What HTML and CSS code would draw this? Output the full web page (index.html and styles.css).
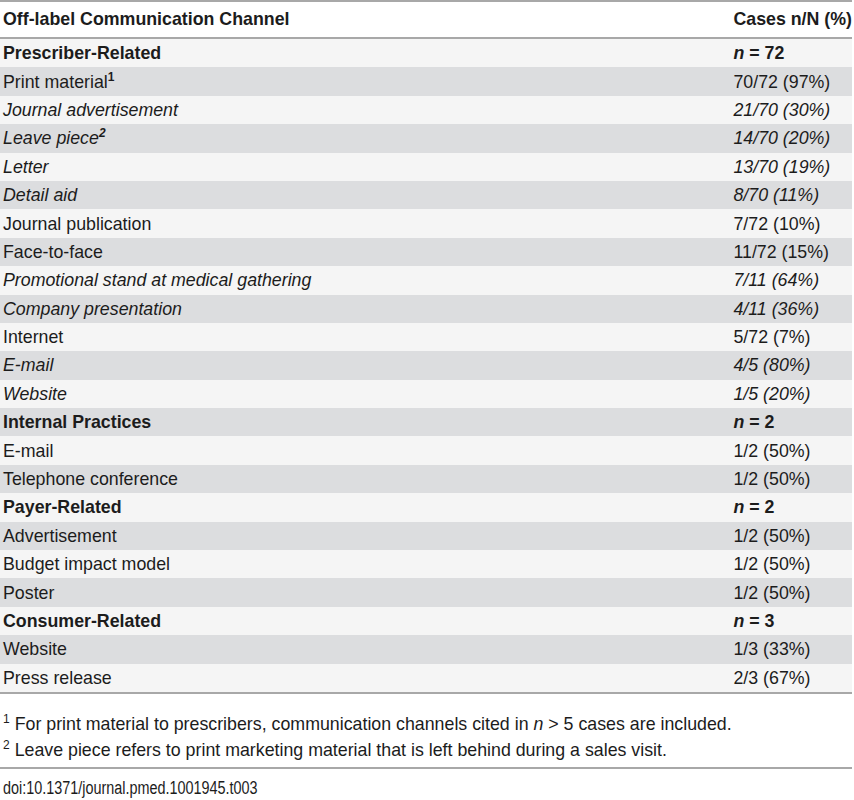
FILE: index.html
```html
<!DOCTYPE html>
<html lang="en">
<head>
    <meta charset="UTF-8">
    <title>Off-label Communication Channels</title>
    <link rel="stylesheet" href="styles.css">
</head>
<body>
    <div class="table-wrap">
        <table class="data-table">
            <thead>
                <tr>
                    <th>Off-label Communication Channel</th>
                    <th class="col-cases">Cases n/N (%)</th>
                </tr>
            </thead>
            <tbody>
                <tr class="group"><td>Prescriber-Related</td><td><i>n</i> = 72</td></tr>
                <tr><td>Print material<sup>1</sup></td><td>70/72 (97%)</td></tr>
                <tr class="sub"><td>Journal advertisement</td><td>21/70 (30%)</td></tr>
                <tr class="sub"><td>Leave piece<sup>2</sup></td><td>14/70 (20%)</td></tr>
                <tr class="sub"><td>Letter</td><td>13/70 (19%)</td></tr>
                <tr class="sub"><td>Detail aid</td><td>8/70 (11%)</td></tr>
                <tr><td>Journal publication</td><td>7/72 (10%)</td></tr>
                <tr><td>Face-to-face</td><td>11/72 (15%)</td></tr>
                <tr class="sub"><td>Promotional stand at medical gathering</td><td>7/11 (64%)</td></tr>
                <tr class="sub"><td>Company presentation</td><td>4/11 (36%)</td></tr>
                <tr><td>Internet</td><td>5/72 (7%)</td></tr>
                <tr class="sub"><td>E-mail</td><td>4/5 (80%)</td></tr>
                <tr class="sub"><td>Website</td><td>1/5 (20%)</td></tr>
                <tr class="group"><td>Internal Practices</td><td><i>n</i> = 2</td></tr>
                <tr><td>E-mail</td><td>1/2 (50%)</td></tr>
                <tr><td>Telephone conference</td><td>1/2 (50%)</td></tr>
                <tr class="group"><td>Payer-Related</td><td><i>n</i> = 2</td></tr>
                <tr><td>Advertisement</td><td>1/2 (50%)</td></tr>
                <tr><td>Budget impact model</td><td>1/2 (50%)</td></tr>
                <tr><td>Poster</td><td>1/2 (50%)</td></tr>
                <tr class="group"><td>Consumer-Related</td><td><i>n</i> = 3</td></tr>
                <tr><td>Website</td><td>1/3 (33%)</td></tr>
                <tr><td>Press release</td><td>2/3 (67%)</td></tr>
            </tbody>
        </table>

        <div class="notes">
            <p><sup>1</sup> For print material to prescribers, communication channels cited in <i>n</i> &gt; 5 cases are included.</p>
            <p><sup>2</sup> Leave piece refers to print marketing material that is left behind during a sales visit.</p>
        </div>

        <p class="doi"><span>doi:10.1371/journal.pmed.1001945.t003</span></p>
    </div>
</body>
</html>
```

FILE: styles.css
```css
body {
    margin: 0;
    background: #fff;
    font-family: "Liberation Sans", Arial, sans-serif;
    color: #1c1c1c;
}
.table-wrap {
    width: 852px;
}
.data-table {
    width: 100%;
    border-collapse: collapse;
    border-top: 2px solid #a8a8a8;
    border-bottom: 2px solid #a8a8a8;
    font-size: 17.8px;
}
.data-table th {
    text-align: left;
    font-weight: bold;
    height: 35px;
    padding: 0 3px;
    border-bottom: 2px solid #a8a8a8;
    background: #fff;
    white-space: nowrap;
}
.data-table td {
    height: 28.4px;
    padding: 0 3px;
    line-height: 20px;
    white-space: nowrap;
}
.data-table th:last-child,
.data-table td:last-child {
    padding: 0 0 0 5px;
    width: 114px;
}
.data-table tbody tr:nth-child(odd) {
    background: #f5f5f5;
}
.data-table tbody tr:nth-child(even) {
    background: #dcdddf;
}
.data-table tr.group td {
    font-weight: bold;
}
.data-table tr.sub td {
    font-style: italic;
}
sup {
    font-size: 12px;
    line-height: 0;
    vertical-align: 7px;
}
.data-table sup {
    font-weight: bold;
}
.notes {
    padding: 17px 0 4px 3px;
    border-bottom: 2px solid #a8a8a8;
    font-size: 17.8px;
}
.notes p {
    margin: 0;
    line-height: 26px;
}
.doi {
    margin: 0;
    padding: 9px 3px 0;
    line-height: 20px;
    font-size: 18px;
}
.doi span {
    display: inline-block;
    transform: scaleX(0.8);
    transform-origin: left center;
}
```
